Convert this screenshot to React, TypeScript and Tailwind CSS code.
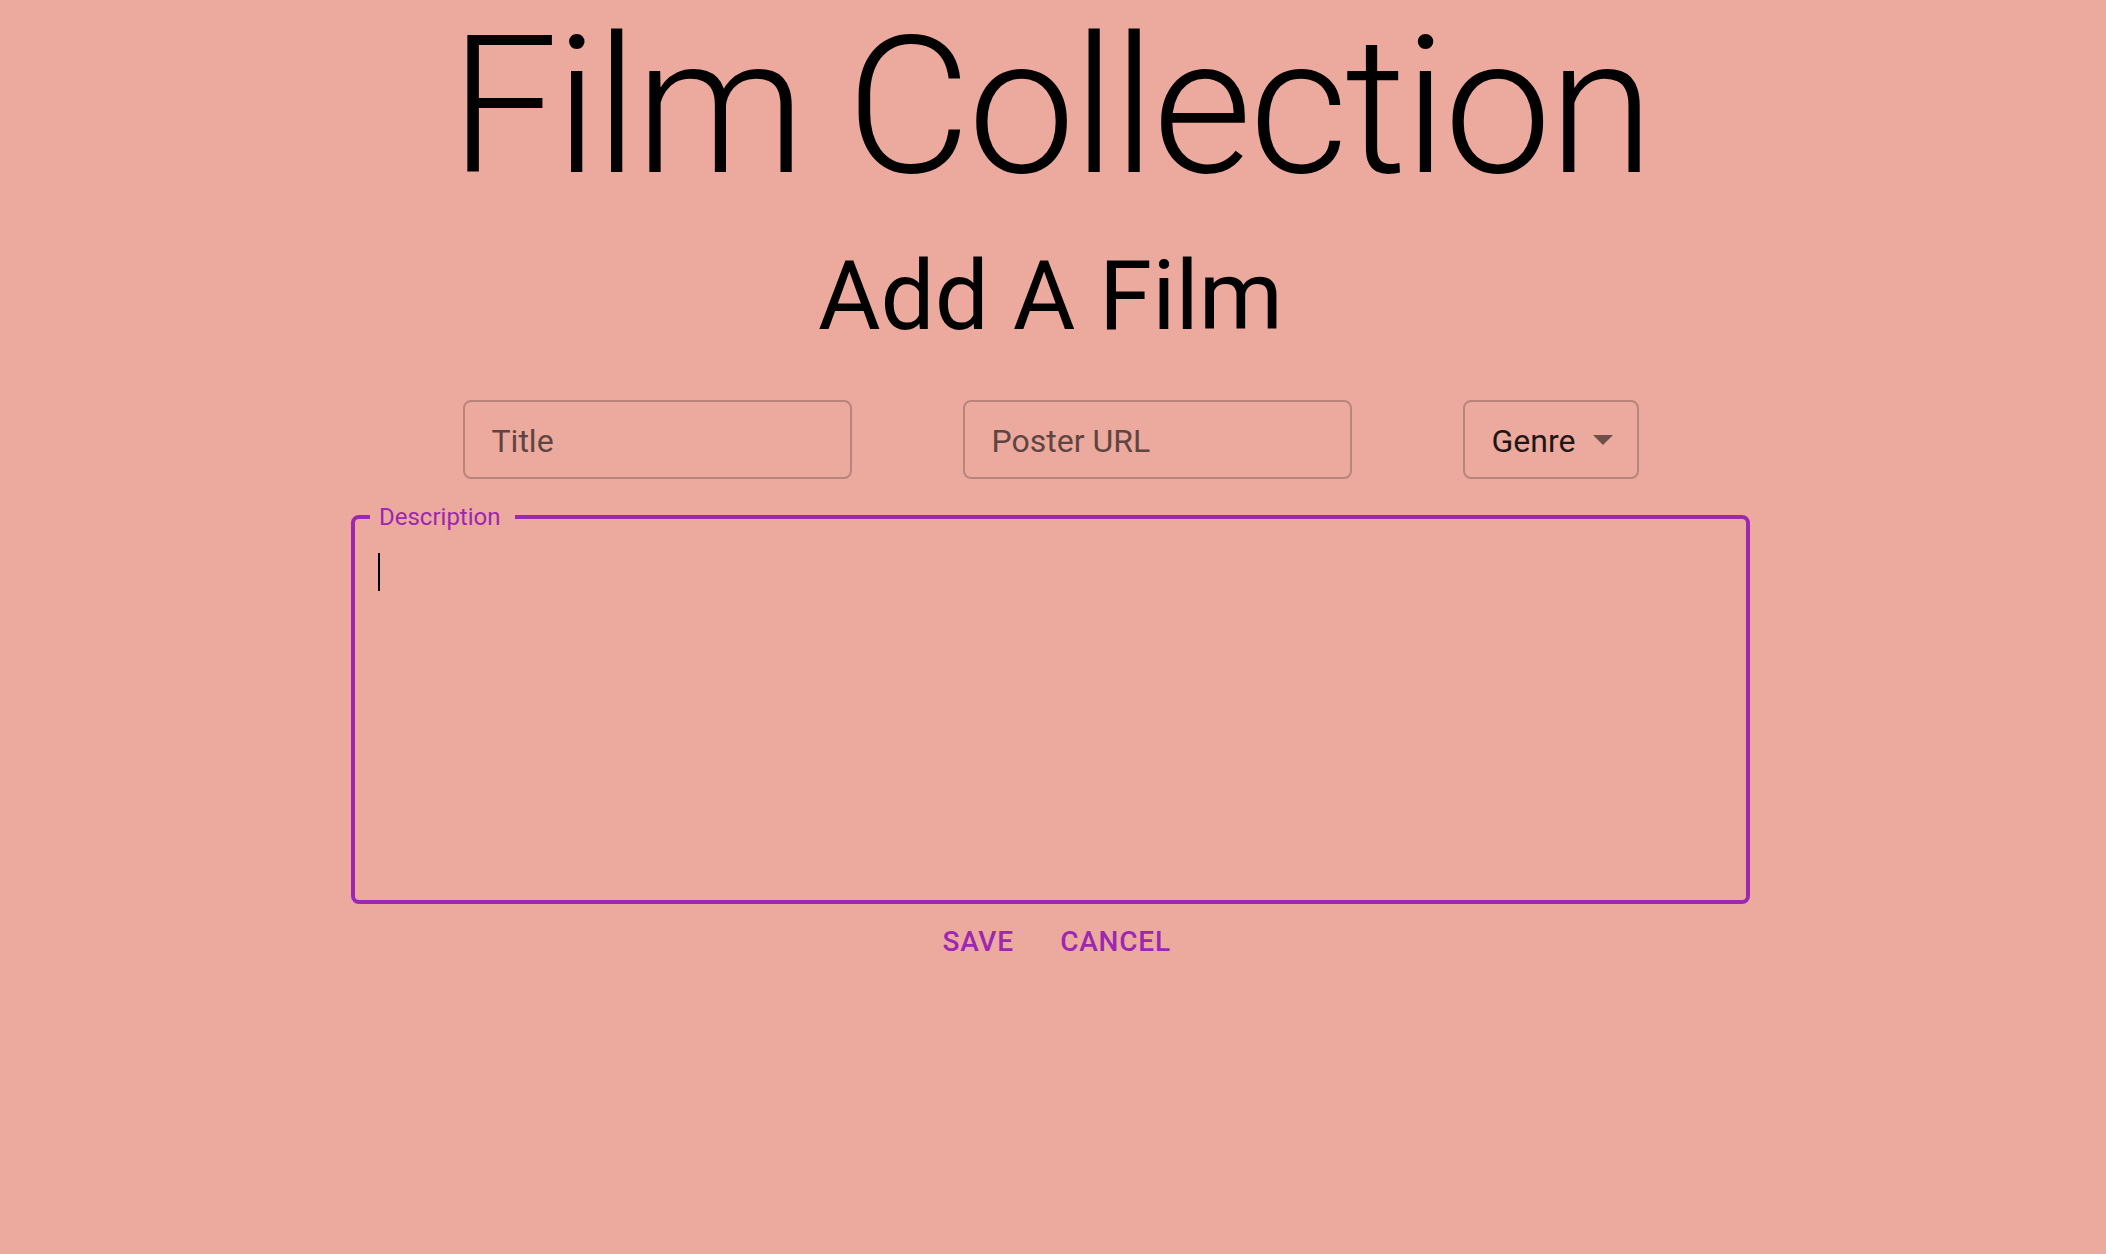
import React from "react";

export default function App() {
  return (
    <div
      className="min-h-[1254px] w-full bg-[#ecaa9f] flex flex-col items-center pr-[5px]"
      style={{ fontFamily: "Roboto, 'Liberation Sans', sans-serif" }}
    >
      <h1 className="text-[192px] leading-[214px] font-light text-black tracking-[-0.01562em]">
        Film Collection
      </h1>
      <h3 className="mt-[34px] text-[96px] leading-[96px] font-normal text-black">
        Add A Film
      </h3>

      <div className="mt-[56px] flex items-center gap-[111px]">
        <div className="w-[389px] h-[79px] rounded-[8px] border-2 border-[#b9847b] flex items-center pl-[27px] pt-[2px]">
          <span className="text-[32px] text-[#5e4541]">Title</span>
        </div>
        <div className="w-[389px] h-[79px] rounded-[8px] border-2 border-[#b9847b] flex items-center pl-[27px] pt-[2px]">
          <span className="text-[32px] text-[#5e4541]">Poster URL</span>
        </div>
        <div className="w-[176px] h-[79px] rounded-[8px] border-2 border-[#b9847b] flex items-center pl-[27px] pt-[2px]">
          <span className="text-[32px] text-[#1f1615]">Genre</span>
          <svg width="20" height="10" viewBox="0 0 20 10" className="ml-[18px] mb-[1px]">
            <path d="M0 0 L10 10 L20 0 Z" fill="#6d4e49" />
          </svg>
        </div>
      </div>

      <fieldset className="mt-[24px] w-[1399px] h-[401px] rounded-[8px] border-4 border-[#9c27b0] px-[23px] pb-0 pt-0 m-0">
        <legend className="ml-[-8px] pl-[9px] pr-[14px] text-[24px] leading-[28px] text-[#9c27b0]">
          Description
        </legend>
        <div className="mt-[22px] w-[2px] h-[38px] bg-black" />
      </fieldset>

      <div className="mt-[1px] flex items-center gap-[2px]">
        <button className="min-w-[128px] px-[16px] py-[12px] text-[28px] leading-[49px] font-medium uppercase tracking-[0.02857em] text-[#9c27b0] rounded-[8px]">
          Save
        </button>
        <button className="min-w-[128px] px-[16px] py-[12px] text-[28px] leading-[49px] font-medium uppercase tracking-[0.02857em] text-[#9c27b0] rounded-[8px]">
          Cancel
        </button>
      </div>
    </div>
  );
}
